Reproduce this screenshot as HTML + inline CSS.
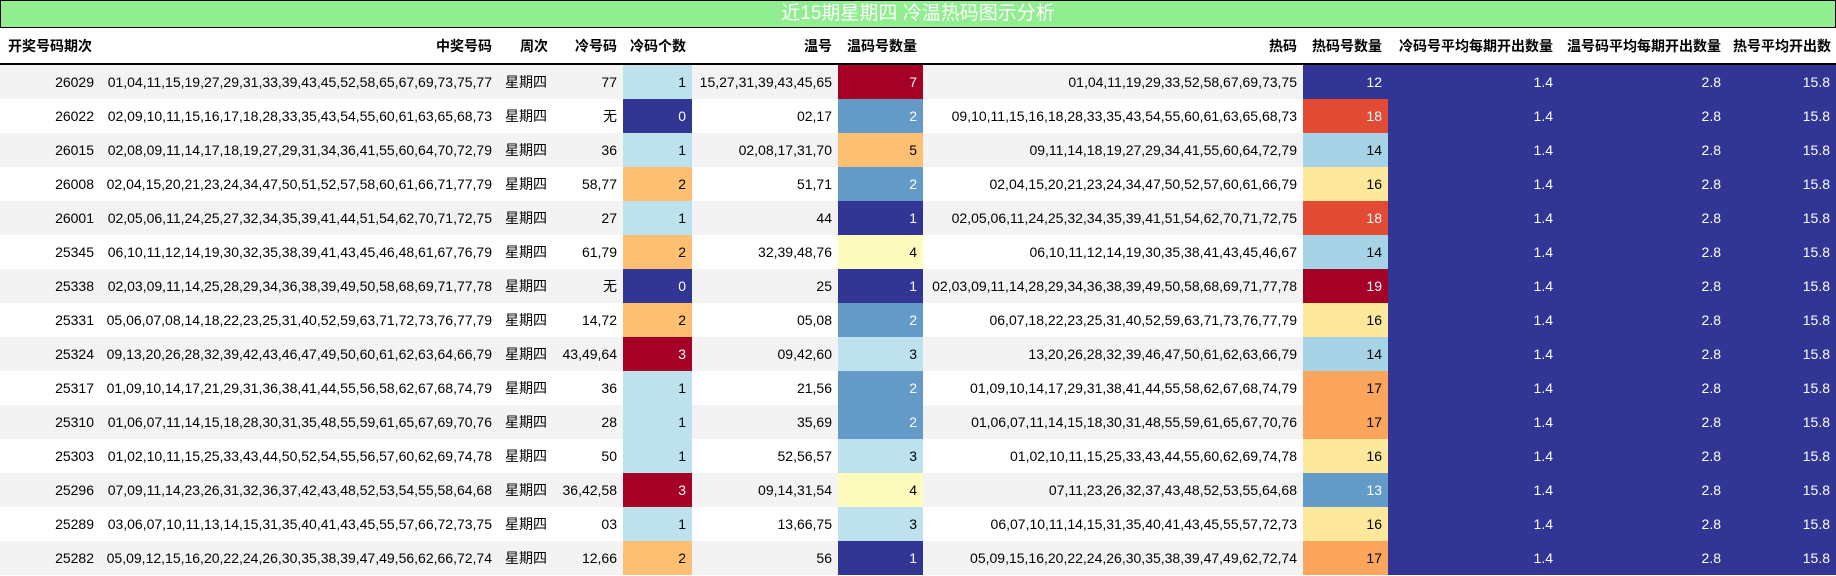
<!DOCTYPE html>
<html><head><meta charset="utf-8"><style>
body{margin:0;width:1836px;height:576px;overflow:hidden;background:#fff;font-family:"Liberation Sans","Noto Sans CJK SC",sans-serif;}
.t{position:absolute;left:0;top:0;width:1834px;height:26px;background:#90ee90;border:1px solid #000;color:#fff;font-size:19px;text-align:center;line-height:26px;}
table{position:absolute;left:0;top:28px;border-collapse:collapse;table-layout:fixed;width:1836px;font-size:14px;color:#000;}
th{height:35px;border-bottom:2px solid #000;font-weight:bold;text-align:right;padding:0 6px;white-space:nowrap;}
th:first-child{text-align:left;padding-left:8px;}
td{height:34px;padding:0 6px;text-align:right;white-space:nowrap;overflow:hidden;}
tr.g td{background:#f3f3f3;}
td.c3{text-align:center;}
tr td.D{background:#313695;color:#fff}
tr td.M{background:#649ac7;color:#fff}
tr td.L{background:#bde2ee}
tr td.L2{background:#a6d4e6}
tr td.Y{background:#fefcbd}
tr td.Y2{background:#fee89b}
tr td.O{background:#fdbf71}
tr td.O2{background:#fca55d}
tr td.R{background:#e34a33;color:#fff}
tr td.X{background:#a50026;color:#fff}
</style></head><body>
<div class="t">近15期星期四 冷温热码图示分析</div>
<table>
<colgroup><col style="width:100px"><col style="width:398px"><col style="width:56px"><col style="width:69px"><col style="width:69px"><col style="width:146px"><col style="width:85px"><col style="width:380px"><col style="width:85px"><col style="width:171px"><col style="width:168px"><col style="width:109px"></colgroup>
<tr><th>开奖号码期次</th><th>中奖号码</th><th>周次</th><th>冷号码</th><th>冷码个数</th><th>温号</th><th>温码号数量</th><th>热码</th><th>热码号数量</th><th>冷码号平均每期开出数量</th><th>温号码平均每期开出数量</th><th>热号平均开出数</th></tr>
<tr class="g"><td>26029</td><td>01,04,11,15,19,27,29,31,33,39,43,45,52,58,65,67,69,73,75,77</td><td class="c3">星期四</td><td>77</td><td class="L">1</td><td>15,27,31,39,43,45,65</td><td class="X">7</td><td>01,04,11,19,29,33,52,58,67,69,73,75</td><td class="D">12</td><td class="D">1.4</td><td class="D">2.8</td><td class="D">15.8</td></tr>
<tr><td>26022</td><td>02,09,10,11,15,16,17,18,28,33,35,43,54,55,60,61,63,65,68,73</td><td class="c3">星期四</td><td>无</td><td class="D">0</td><td>02,17</td><td class="M">2</td><td>09,10,11,15,16,18,28,33,35,43,54,55,60,61,63,65,68,73</td><td class="R">18</td><td class="D">1.4</td><td class="D">2.8</td><td class="D">15.8</td></tr>
<tr class="g"><td>26015</td><td>02,08,09,11,14,17,18,19,27,29,31,34,36,41,55,60,64,70,72,79</td><td class="c3">星期四</td><td>36</td><td class="L">1</td><td>02,08,17,31,70</td><td class="O">5</td><td>09,11,14,18,19,27,29,34,41,55,60,64,72,79</td><td class="L2">14</td><td class="D">1.4</td><td class="D">2.8</td><td class="D">15.8</td></tr>
<tr><td>26008</td><td>02,04,15,20,21,23,24,34,47,50,51,52,57,58,60,61,66,71,77,79</td><td class="c3">星期四</td><td>58,77</td><td class="O">2</td><td>51,71</td><td class="M">2</td><td>02,04,15,20,21,23,24,34,47,50,52,57,60,61,66,79</td><td class="Y2">16</td><td class="D">1.4</td><td class="D">2.8</td><td class="D">15.8</td></tr>
<tr class="g"><td>26001</td><td>02,05,06,11,24,25,27,32,34,35,39,41,44,51,54,62,70,71,72,75</td><td class="c3">星期四</td><td>27</td><td class="L">1</td><td>44</td><td class="D">1</td><td>02,05,06,11,24,25,32,34,35,39,41,51,54,62,70,71,72,75</td><td class="R">18</td><td class="D">1.4</td><td class="D">2.8</td><td class="D">15.8</td></tr>
<tr><td>25345</td><td>06,10,11,12,14,19,30,32,35,38,39,41,43,45,46,48,61,67,76,79</td><td class="c3">星期四</td><td>61,79</td><td class="O">2</td><td>32,39,48,76</td><td class="Y">4</td><td>06,10,11,12,14,19,30,35,38,41,43,45,46,67</td><td class="L2">14</td><td class="D">1.4</td><td class="D">2.8</td><td class="D">15.8</td></tr>
<tr class="g"><td>25338</td><td>02,03,09,11,14,25,28,29,34,36,38,39,49,50,58,68,69,71,77,78</td><td class="c3">星期四</td><td>无</td><td class="D">0</td><td>25</td><td class="D">1</td><td>02,03,09,11,14,28,29,34,36,38,39,49,50,58,68,69,71,77,78</td><td class="X">19</td><td class="D">1.4</td><td class="D">2.8</td><td class="D">15.8</td></tr>
<tr><td>25331</td><td>05,06,07,08,14,18,22,23,25,31,40,52,59,63,71,72,73,76,77,79</td><td class="c3">星期四</td><td>14,72</td><td class="O">2</td><td>05,08</td><td class="M">2</td><td>06,07,18,22,23,25,31,40,52,59,63,71,73,76,77,79</td><td class="Y2">16</td><td class="D">1.4</td><td class="D">2.8</td><td class="D">15.8</td></tr>
<tr class="g"><td>25324</td><td>09,13,20,26,28,32,39,42,43,46,47,49,50,60,61,62,63,64,66,79</td><td class="c3">星期四</td><td>43,49,64</td><td class="X">3</td><td>09,42,60</td><td class="L">3</td><td>13,20,26,28,32,39,46,47,50,61,62,63,66,79</td><td class="L2">14</td><td class="D">1.4</td><td class="D">2.8</td><td class="D">15.8</td></tr>
<tr><td>25317</td><td>01,09,10,14,17,21,29,31,36,38,41,44,55,56,58,62,67,68,74,79</td><td class="c3">星期四</td><td>36</td><td class="L">1</td><td>21,56</td><td class="M">2</td><td>01,09,10,14,17,29,31,38,41,44,55,58,62,67,68,74,79</td><td class="O2">17</td><td class="D">1.4</td><td class="D">2.8</td><td class="D">15.8</td></tr>
<tr class="g"><td>25310</td><td>01,06,07,11,14,15,18,28,30,31,35,48,55,59,61,65,67,69,70,76</td><td class="c3">星期四</td><td>28</td><td class="L">1</td><td>35,69</td><td class="M">2</td><td>01,06,07,11,14,15,18,30,31,48,55,59,61,65,67,70,76</td><td class="O2">17</td><td class="D">1.4</td><td class="D">2.8</td><td class="D">15.8</td></tr>
<tr><td>25303</td><td>01,02,10,11,15,25,33,43,44,50,52,54,55,56,57,60,62,69,74,78</td><td class="c3">星期四</td><td>50</td><td class="L">1</td><td>52,56,57</td><td class="L">3</td><td>01,02,10,11,15,25,33,43,44,55,60,62,69,74,78</td><td class="Y2">16</td><td class="D">1.4</td><td class="D">2.8</td><td class="D">15.8</td></tr>
<tr class="g"><td>25296</td><td>07,09,11,14,23,26,31,32,36,37,42,43,48,52,53,54,55,58,64,68</td><td class="c3">星期四</td><td>36,42,58</td><td class="X">3</td><td>09,14,31,54</td><td class="Y">4</td><td>07,11,23,26,32,37,43,48,52,53,55,64,68</td><td class="M">13</td><td class="D">1.4</td><td class="D">2.8</td><td class="D">15.8</td></tr>
<tr><td>25289</td><td>03,06,07,10,11,13,14,15,31,35,40,41,43,45,55,57,66,72,73,75</td><td class="c3">星期四</td><td>03</td><td class="L">1</td><td>13,66,75</td><td class="L">3</td><td>06,07,10,11,14,15,31,35,40,41,43,45,55,57,72,73</td><td class="Y2">16</td><td class="D">1.4</td><td class="D">2.8</td><td class="D">15.8</td></tr>
<tr class="g"><td>25282</td><td>05,09,12,15,16,20,22,24,26,30,35,38,39,47,49,56,62,66,72,74</td><td class="c3">星期四</td><td>12,66</td><td class="O">2</td><td>56</td><td class="D">1</td><td>05,09,15,16,20,22,24,26,30,35,38,39,47,49,62,72,74</td><td class="O2">17</td><td class="D">1.4</td><td class="D">2.8</td><td class="D">15.8</td></tr>
</table>
</body></html>
